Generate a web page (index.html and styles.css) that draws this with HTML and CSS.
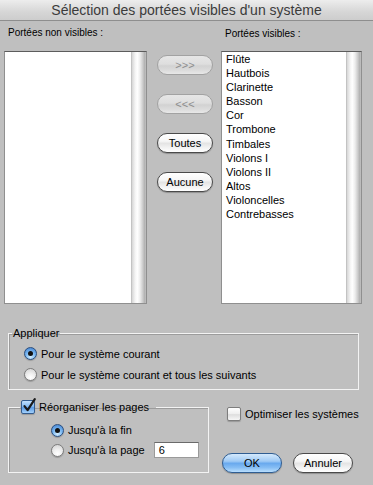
FILE: index.html
```html
<!DOCTYPE html>
<html lang="fr">
<head>
<meta charset="utf-8">
<title>Sélection des portées visibles d'un système</title>
<link rel="stylesheet" href="styles.css">
</head>
<body>
<div class="window">
  <div class="titlebar">Sélection des portées visibles d'un système</div>

  <div class="lists">
    <div class="col col-left">
      <div class="label">Portées non visibles :</div>
      <div class="listbox">
        <div class="items"></div>
        <div class="scroll"></div>
      </div>
    </div>

    <div class="mid">
      <button class="pill" disabled>&gt;&gt;&gt;</button>
      <button class="pill" disabled>&lt;&lt;&lt;</button>
      <button class="pill">Toutes</button>
      <button class="pill">Aucune</button>
    </div>

    <div class="col col-right">
      <div class="label label-right">Portées visibles :</div>
      <div class="listbox">
        <div class="items">
          <div>Flûte</div>
          <div>Hautbois</div>
          <div>Clarinette</div>
          <div>Basson</div>
          <div>Cor</div>
          <div>Trombone</div>
          <div>Timbales</div>
          <div>Violons I</div>
          <div>Violons II</div>
          <div>Altos</div>
          <div>Violoncelles</div>
          <div>Contrebasses</div>
        </div>
        <div class="scroll"></div>
      </div>
    </div>
  </div>

  <fieldset class="group apply">
    <legend>Appliquer</legend>
    <div class="group-body">
      <div class="row"><span class="radio on"></span>Pour le système courant</div>
      <div class="row"><span class="radio"></span>Pour le système courant et tous les suivants</div>
    </div>
  </fieldset>

  <div class="bottom">
    <fieldset class="group reorg">
      <legend><span class="check on"><svg class="tick" width="16" height="16" viewBox="0 0 16 16"><path d="M3.5 8.2 L6.6 12.2 L13.8 1.2" fill="none" stroke="#1a1a1a" stroke-width="2.2" stroke-linecap="round" stroke-linejoin="round"/></svg></span>Réorganiser les pages</legend>
      <div class="group-body">
        <div class="row"><span class="radio on"></span>Jusqu'à la fin</div>
        <div class="row"><span class="radio"></span>Jusqu'à la page<span class="field">6</span></div>
      </div>
    </fieldset>

    <div class="side">
      <div class="row opt"><span class="check"></span>Optimiser les systèmes</div>
      <div class="actions">
        <button class="pill wide ok">OK</button>
        <button class="pill wide">Annuler</button>
      </div>
    </div>
  </div>
</div>
</body>
</html>
```

FILE: styles.css
```css
html, body {
  margin: 0;
  padding: 0;
}

body {
  width: 373px;
  height: 485px;
  overflow: hidden;
  background: #bfbfbf;
  font-family: "Liberation Sans", Arial, sans-serif;
  font-size: 11px;
  color: #000;
}

.window {
  display: flex;
  flex-direction: column;
}

.titlebar {
  height: 21px;
  box-sizing: border-box;
  border-bottom: 1px solid #8e8e8e;
  background: linear-gradient(#ededed, #d6d6d6 60%, #cdcdcd);
  text-align: center;
  font-size: 14px;
  line-height: 20px;
  color: #3b3b3b;
}

/* ---------- lists ---------- */
.lists {
  display: flex;
  padding-left: 4px;
  height: 283px;
}

.col-left {
  width: 143px;
}

.col-right {
  width: 141px;
  margin-left: 8px;
}

.label {
  height: 30px;
  box-sizing: border-box;
  padding: 5px 0 0 4px;
  font-size: 10px;
  line-height: 13px;
}

.label-right {
  padding-top: 6px;
}

.listbox {
  height: 253px;
  box-sizing: border-box;
  display: flex;
  background: #fff;
  border: 1px solid #8f8f8f;
  border-top-color: #5c5c5c;
}

.items {
  flex: 1;
  padding: 0 0 0 4px;
  line-height: 14.1px;
  font-size: 11px;
}

.scroll {
  width: 15px;
  flex: none;
  background: linear-gradient(to right, #b4b4b4 0, #d8d8d8 8%, #f4f4f4 28%, #ffffff 42%, #ededed 60%, #cdcdcd 78%, #b0b0b0 92%, #c4c4c4 100%);
}

.mid {
  width: 56px;
  margin-left: 10px;
  padding-top: 34px;
  display: flex;
  flex-direction: column;
  gap: 19px;
}

/* ---------- aqua buttons ---------- */
.pill {
  height: 20px;
  width: 56px;
  padding: 0;
  box-sizing: border-box;
  border-radius: 10px;
  border: 1px solid #4a4a4a;
  background: linear-gradient(#ffffff 0%, #f6f6f6 40%, #e4e4e4 52%, #f2f2f2 75%, #ffffff 100%);
  box-shadow: 0 1px 1px rgba(0, 0, 0, 0.25);
  font-family: "Liberation Sans", Arial, sans-serif;
  font-size: 11px;
  line-height: 18px;
  color: #000;
}

.pill:disabled {
  border-color: #a2a2a2;
  background: linear-gradient(#e6e6e6 0%, #dedede 45%, #d2d2d2 55%, #dcdcdc 80%, #e8e8e8 100%);
  color: #8e8e8e;
  box-shadow: none;
}

.pill.wide {
  width: 60px;
}

.pill.ok {
  border-color: #2f5d92;
  background: linear-gradient(#d4e9fc 0%, #9fcaf5 40%, #69a9ee 52%, #85bdf4 75%, #b9defd 100%);
}

/* ---------- group boxes ---------- */
.group {
  margin: 0;
  padding: 0;
  min-width: 0;
  border: 1px solid #f3f3f3;
  box-shadow: inset 1px 1px 0 #9c9c9c;
}

.group legend {
  padding: 0 1px;
  margin-left: 3px;
  line-height: 13px;
  font-size: 11px;
}

.apply {
  margin: 23px 14px 0 8px;
}

.apply .group-body {
  padding: 3px 0 4px 15px;
}

.row {
  display: flex;
  align-items: center;
  gap: 4px;
  height: 21px;
  white-space: nowrap;
}

.radio {
  position: relative;
  flex: none;
  width: 13px;
  height: 13px;
  box-sizing: border-box;
  border-radius: 50%;
  border: 1px solid #7c7c7c;
  background: radial-gradient(circle at 50% 78%, #ffffff 0, #f2f2f2 35%, #cfcfcf 100%);
  box-shadow: 0 1px 1px rgba(0, 0, 0, 0.2);
}

.radio.on {
  border-color: #2b4e7e;
  background: radial-gradient(circle at 50% 80%, #d6efff 0, #7ab8f2 45%, #3c7bcb 100%);
}

.radio.on::after {
  content: "";
  position: absolute;
  left: 50%;
  top: 50%;
  width: 5px;
  height: 5px;
  margin: -2.5px 0 0 -2.5px;
  border-radius: 50%;
  background: #111;
}

.check {
  position: relative;
  flex: none;
  display: inline-block;
  width: 14px;
  height: 14px;
  box-sizing: border-box;
  border: 1px solid #7d7d7d;
  border-radius: 2px;
  background: linear-gradient(#ffffff, #eeeeee 50%, #dedede 55%, #f6f6f6);
  box-shadow: 0 1px 1px rgba(0, 0, 0, 0.2);
  vertical-align: middle;
}

.check.on {
  border-color: #345c8e;
  background: linear-gradient(#c2e0fc, #7fb7f1 48%, #5a9be6 55%, #a3d1fb);
}

.tick {
  position: absolute;
  left: -1px;
  top: -3px;
  overflow: visible;
}

/* ---------- bottom area ---------- */
.bottom {
  display: flex;
  margin-top: 10px;
}

.reorg {
  width: 201px;
  box-sizing: border-box;
  margin-left: 8px;
}

.reorg legend {
  margin-left: 11px;
  padding: 0 7px 0 1px;
  line-height: 14px;
  display: flex;
  align-items: center;
  gap: 4px;
}

.reorg .group-body {
  padding: 6px 0 12px 42px;
}

.reorg .row {
  height: 20px;
}

.field {
  margin-left: 5px;
  width: 45px;
  height: 16px;
  box-sizing: border-box;
  border: 1px solid #9a9a9a;
  border-top-color: #6a6a6a;
  background: #fff;
  padding-left: 4px;
  line-height: 14px;
  font-size: 11px;
}

.side {
  margin-left: 13px;
  width: 131px;
  display: flex;
  flex-direction: column;
}

.row.opt {
  margin-top: 3px;
  padding-left: 5px;
}

.actions {
  margin-top: 29px;
  display: flex;
  gap: 11px;
}
```
